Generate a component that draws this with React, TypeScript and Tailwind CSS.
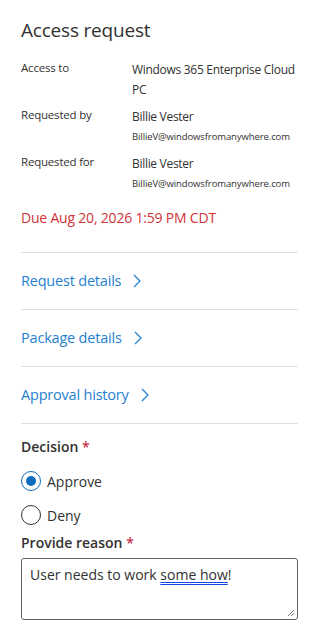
import React from "react"

const font = { fontFamily: '"Open Sans", "Noto Sans", Arial, sans-serif' }

function Chevron() {
  return (
    <svg width="8" height="14" viewBox="0 0 8 14" fill="none" className="ml-3">
      <polyline points="1,1 7,7 1,13" stroke="#1f7fd0" strokeWidth="1.2" />
    </svg>
  )
}

function LinkRow({ label }: { label: string }) {
  return (
    <div className="border-t border-[#e1dfdd] py-[18px]">
      <a href="#" className="flex items-center text-[14.5px] tracking-[-0.2px] leading-5 text-[#1f7fd0]">
        {label}
        <Chevron />
      </a>
    </div>
  )
}

function Radio({ checked, label }: { checked: boolean; label: string }) {
  return (
    <label className="flex items-center gap-[6px] h-5">
      <span
        className={`w-5 h-5 rounded-full border flex items-center justify-center ${
          checked ? "border-[#0f6cbd]" : "border-[#323130]"
        }`}
      >
        {checked && <span className="w-[10px] h-[10px] rounded-full bg-[#0f6cbd]" />}
      </span>
      <span className="text-[14px] text-[#323130]">{label}</span>
    </label>
  )
}

export default function App() {
  const rows = [
    { label: "Access to", value: ["Windows 365 Enterprise Cloud PC"] },
    { label: "Requested by", value: ["Billie Vester", "BillieV@windowsfromanywhere.com"] },
    { label: "Requested for", value: ["Billie Vester", "BillieV@windowsfromanywhere.com"] },
  ]

  return (
    <div style={font} className="w-[321px] min-h-[635px] bg-white pl-[21px] pr-[23px] pt-[16px] text-[#323130]">
      <h1 className="text-[19px] tracking-[-0.2px] leading-7 text-[#323130]">Access request</h1>

      <div className="mt-[16px] flex flex-col gap-[7px]">
        {rows.map((r) => (
          <div key={r.label} className="grid grid-cols-[111px_1fr]">
            <div className="text-[11.5px] tracking-[-0.2px] leading-5 -mt-[2px]">{r.label}</div>
            <div className="flex flex-col">
              <div className="text-[12px] tracking-[-0.3px] leading-5">{r.value[0]}</div>
              {r.value[1] && <div className="text-[9.5px] tracking-[-0.1px] leading-5">{r.value[1]}</div>}
            </div>
          </div>
        ))}
      </div>

      <div className="mt-[14px] text-[14px] tracking-[-0.2px] leading-5 text-[#d13438]">Due Aug 20, 2026 1:59 PM CDT</div>

      <div className="mt-[24px]">
        <LinkRow label="Request details" />
        <LinkRow label="Package details" />
        <LinkRow label="Approval history" />
      </div>

      <div className="border-t border-[#e1dfdd] pt-[13px]">
        <div className="text-[14px] leading-5 font-semibold">
          Decision <span className="text-[#c4314b]">*</span>
        </div>
        <div className="mt-[14px] flex flex-col gap-[14px]">
          <Radio checked label="Approve" />
          <Radio checked={false} label="Deny" />
        </div>
        <div className="mt-[8px] text-[14px] leading-5 font-semibold">
          Provide reason <span className="text-[#c4314b]">*</span>
        </div>
        <div className="relative mt-[5px] h-[62px] rounded-[3px] border border-[#616161] px-[8px] pt-[6px] text-[14px] leading-5">
          User needs to work{" "}
          <span className="underline decoration-double decoration-blue-700 underline-offset-2">some how</span>!
          <svg width="8" height="8" viewBox="0 0 8 8" className="absolute right-[2px] bottom-[2px]">
            <line x1="1" y1="7" x2="7" y2="1" stroke="#777" strokeWidth="1" />
            <line x1="4" y1="7" x2="7" y2="4" stroke="#777" strokeWidth="1" />
          </svg>
        </div>
      </div>
    </div>
  )
}
